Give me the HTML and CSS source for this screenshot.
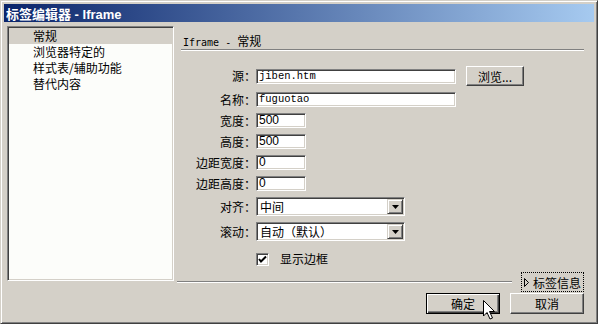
FILE: index.html
```html
<!DOCTYPE html>
<html lang="zh-CN">
<head>
  <meta charset="UTF-8" />
  <title>标签编辑器 - Iframe</title>
  <link rel="stylesheet" href="styles.css">
</head>
<body>
  <div class="window">
    <div class="titlebar">标签编辑器 - Iframe</div>

    <div class="body">
      <!-- Category list -->
      <ul class="tree">
        <li class="selected">常规</li>
        <li>浏览器特定的</li>
        <li>样式表/辅助功能</li>
        <li>替代内容</li>
      </ul>

      <div class="main">
        <div class="section-title">Iframe - <span class="cjk">常规</span></div>

        <div class="form">
          <div class="row">
            <label>源：</label>
            <div class="field wide mono">jiben.htm</div>
            <div class="btn browse">浏览...</div>
          </div>
          <div class="row">
            <label>名称：</label>
            <div class="field wide mono">fuguotao</div>
          </div>
          <div class="row">
            <label>宽度：</label>
            <div class="field small">500</div>
          </div>
          <div class="row">
            <label>高度：</label>
            <div class="field small">500</div>
          </div>
          <div class="row">
            <label>边距宽度：</label>
            <div class="field small">0</div>
          </div>
          <div class="row">
            <label>边距高度：</label>
            <div class="field small">0</div>
          </div>
          <div class="row">
            <label>对齐：</label>
            <div class="select">
              <span>中间</span>
              <span class="arrow"><svg width="7" height="4" viewBox="0 0 7 4"><polygon points="0,0 7,0 3.5,4" fill="#000"/></svg></span>
            </div>
          </div>
          <div class="row">
            <label>滚动：</label>
            <div class="select">
              <span>自动（默认）</span>
              <span class="arrow"><svg width="7" height="4" viewBox="0 0 7 4"><polygon points="0,0 7,0 3.5,4" fill="#000"/></svg></span>
            </div>
          </div>
          <div class="row check-row">
            <span class="check"><svg width="9" height="9" viewBox="0 0 9 9"><polyline points="1,4 3,6.5 8,1.5" fill="none" stroke="#000" stroke-width="2"/></svg></span>
            <span class="check-label">显示边框</span>
          </div>
        </div>

        <div class="info-row">
          <span class="line"></span>
          <div class="tag-info">
            <svg width="5" height="9" viewBox="0 0 5 9"><polygon points="0.5,0.5 4.5,4.5 0.5,8.5" fill="none" stroke="#000" stroke-width="1"/></svg>
            <span>标签信息</span>
          </div>
        </div>

        <div class="actions">
          <div class="btn default">确定</div>
          <div class="btn">取消</div>
        </div>
      </div>
    </div>

    <!-- mouse pointer over the OK button -->
    <svg class="cursor" width="13" height="20" viewBox="0 0 13 20">
      <polygon points="0.5,0.5 0.5,16 4,12.5 7,19 9.5,18 6.5,11.5 11.5,11.5" fill="#fff" stroke="#000" stroke-width="1"/>
    </svg>
  </div>
</body>
</html>
```

FILE: styles.css
```css
* { box-sizing: border-box; }
body {
  margin: 0;
  background: #d4d0c8;
  font-family: "Noto Sans CJK SC", sans-serif;
  font-size: 12px;
  color: #000;
}

.window {
  position: relative;
  width: 598px;
  height: 324px;
  padding: 3px 3px 0 3px;
  background: #d4d0c8;
  border: 1px solid;
  border-color: #d4d0c8 #404040 #404040 #d4d0c8;
  box-shadow: inset 1px 1px #fff, inset -1px -1px #808080;
}

.titlebar {
  height: 18px;
  padding-left: 2px;
  line-height: 18px;
  color: #fff;
  font: bold 13px "Liberation Sans", "Noto Sans CJK SC", sans-serif;
  background: linear-gradient(to right, #0a246a, #a6caf0);
}

.body {
  display: flex;
  align-items: flex-start;
  margin-top: 4px;
  padding-left: 3px;
}

/* left list */
.tree {
  list-style: none;
  margin: 0;
  padding: 1px;
  width: 167px;
  height: 255px;
  background: #fcfdfa;
  border: 1px solid;
  border-color: #808080 #fff #fff #808080;
  box-shadow: inset 1px 1px #404040, inset -1px -1px #d4d0c8;
}
.tree li {
  height: 16px;
  line-height: 16px;
  padding-left: 24px;
  white-space: nowrap;
}
.tree li.selected {
  background: #d4d0c8;
}

.main {
  display: flex;
  flex-direction: column;
  width: 403px;
  margin-left: 7px;
}

.section-title {
  height: 24px;
  padding: 8px 0 0 2px;
  line-height: 14px;
  font-family: "DejaVu Sans Mono", monospace;
  font-size: 10px;
  border-bottom: 1px solid #808080;
  box-shadow: 0 1px #fff;
}
.section-title .cjk {
  font-family: "Noto Sans CJK SC", sans-serif;
  font-size: 12px;
}

/* form */
.form {
  display: flex;
  flex-direction: column;
  gap: 6px;
  margin-top: 16px;
}
.row {
  display: flex;
  align-items: center;
}
.row label {
  width: 75px;
  text-align: right;
  line-height: 14px;
  white-space: nowrap;
}

.field {
  height: 15px;
  padding: 0 2px;
  line-height: 13px;
  background: #fff;
  font-family: "Liberation Sans", sans-serif;
  font-size: 12px;
  border: 1px solid;
  border-color: #808080 #fff #fff #808080;
  box-shadow: inset 1px 1px #404040, inset -1px -1px #d4d0c8;
}
.wide { width: 200px; }
.small { width: 50px; }
.mono {
  font-family: "Liberation Mono", monospace;
  font-size: 10.5px;
}

.btn {
  display: flex;
  align-items: center;
  justify-content: center;
  height: 20px;
  background: #d4d0c8;
  border: 1px solid;
  border-color: #fff #404040 #404040 #fff;
  box-shadow: inset -1px -1px #808080;
}
.browse {
  width: 58px;
  margin-left: 10px;
}

.select {
  display: flex;
  align-items: center;
  justify-content: space-between;
  width: 149px;
  height: 19px;
  padding: 1px 1px 1px 3px;
  background: #fff;
  border: 1px solid;
  border-color: #808080 #fff #fff #808080;
  box-shadow: inset 1px 1px #404040, inset -1px -1px #d4d0c8;
}
.select .arrow {
  display: flex;
  align-items: center;
  justify-content: center;
  width: 16px;
  height: 15px;
  background: #d4d0c8;
  border: 1px solid;
  border-color: #d4d0c8 #404040 #404040 #d4d0c8;
  box-shadow: inset 1px 1px #fff, inset -1px -1px #808080;
}

.check-row {
  margin-top: 5px;
  padding-left: 75px;
  height: 14px;
}
.check {
  display: flex;
  align-items: center;
  justify-content: center;
  width: 13px;
  height: 13px;
  background: #fff;
  border: 1px solid;
  border-color: #808080 #fff #fff #808080;
  box-shadow: inset 1px 1px #404040, inset -1px -1px #d4d0c8;
}
.check-label {
  margin-left: 11px;
  line-height: 14px;
}

/* bottom */
.info-row {
  display: flex;
  align-items: center;
  height: 20px;
  margin-top: 6px;
}
.line {
  flex: 1;
  height: 2px;
  margin: 0 9px 0 -4px;
  border-top: 1px solid #808080;
  border-bottom: 1px solid #fff;
}
.tag-info {
  display: flex;
  align-items: center;
  gap: 4px;
  width: 63px;
  height: 20px;
  padding-left: 2px;
  border: 1px dotted #000;
}

.actions {
  display: flex;
  justify-content: flex-end;
  gap: 10px;
  margin-top: 1px;
}
.actions .btn {
  width: 74px;
  height: 21px;
}
.actions .default {
  border: 1px solid #000;
  box-shadow: inset 1px 1px #fff, inset -1px -1px #404040, inset -2px -2px #808080;
}

.cursor {
  position: absolute;
  left: 482px;
  top: 299px;
}
```
